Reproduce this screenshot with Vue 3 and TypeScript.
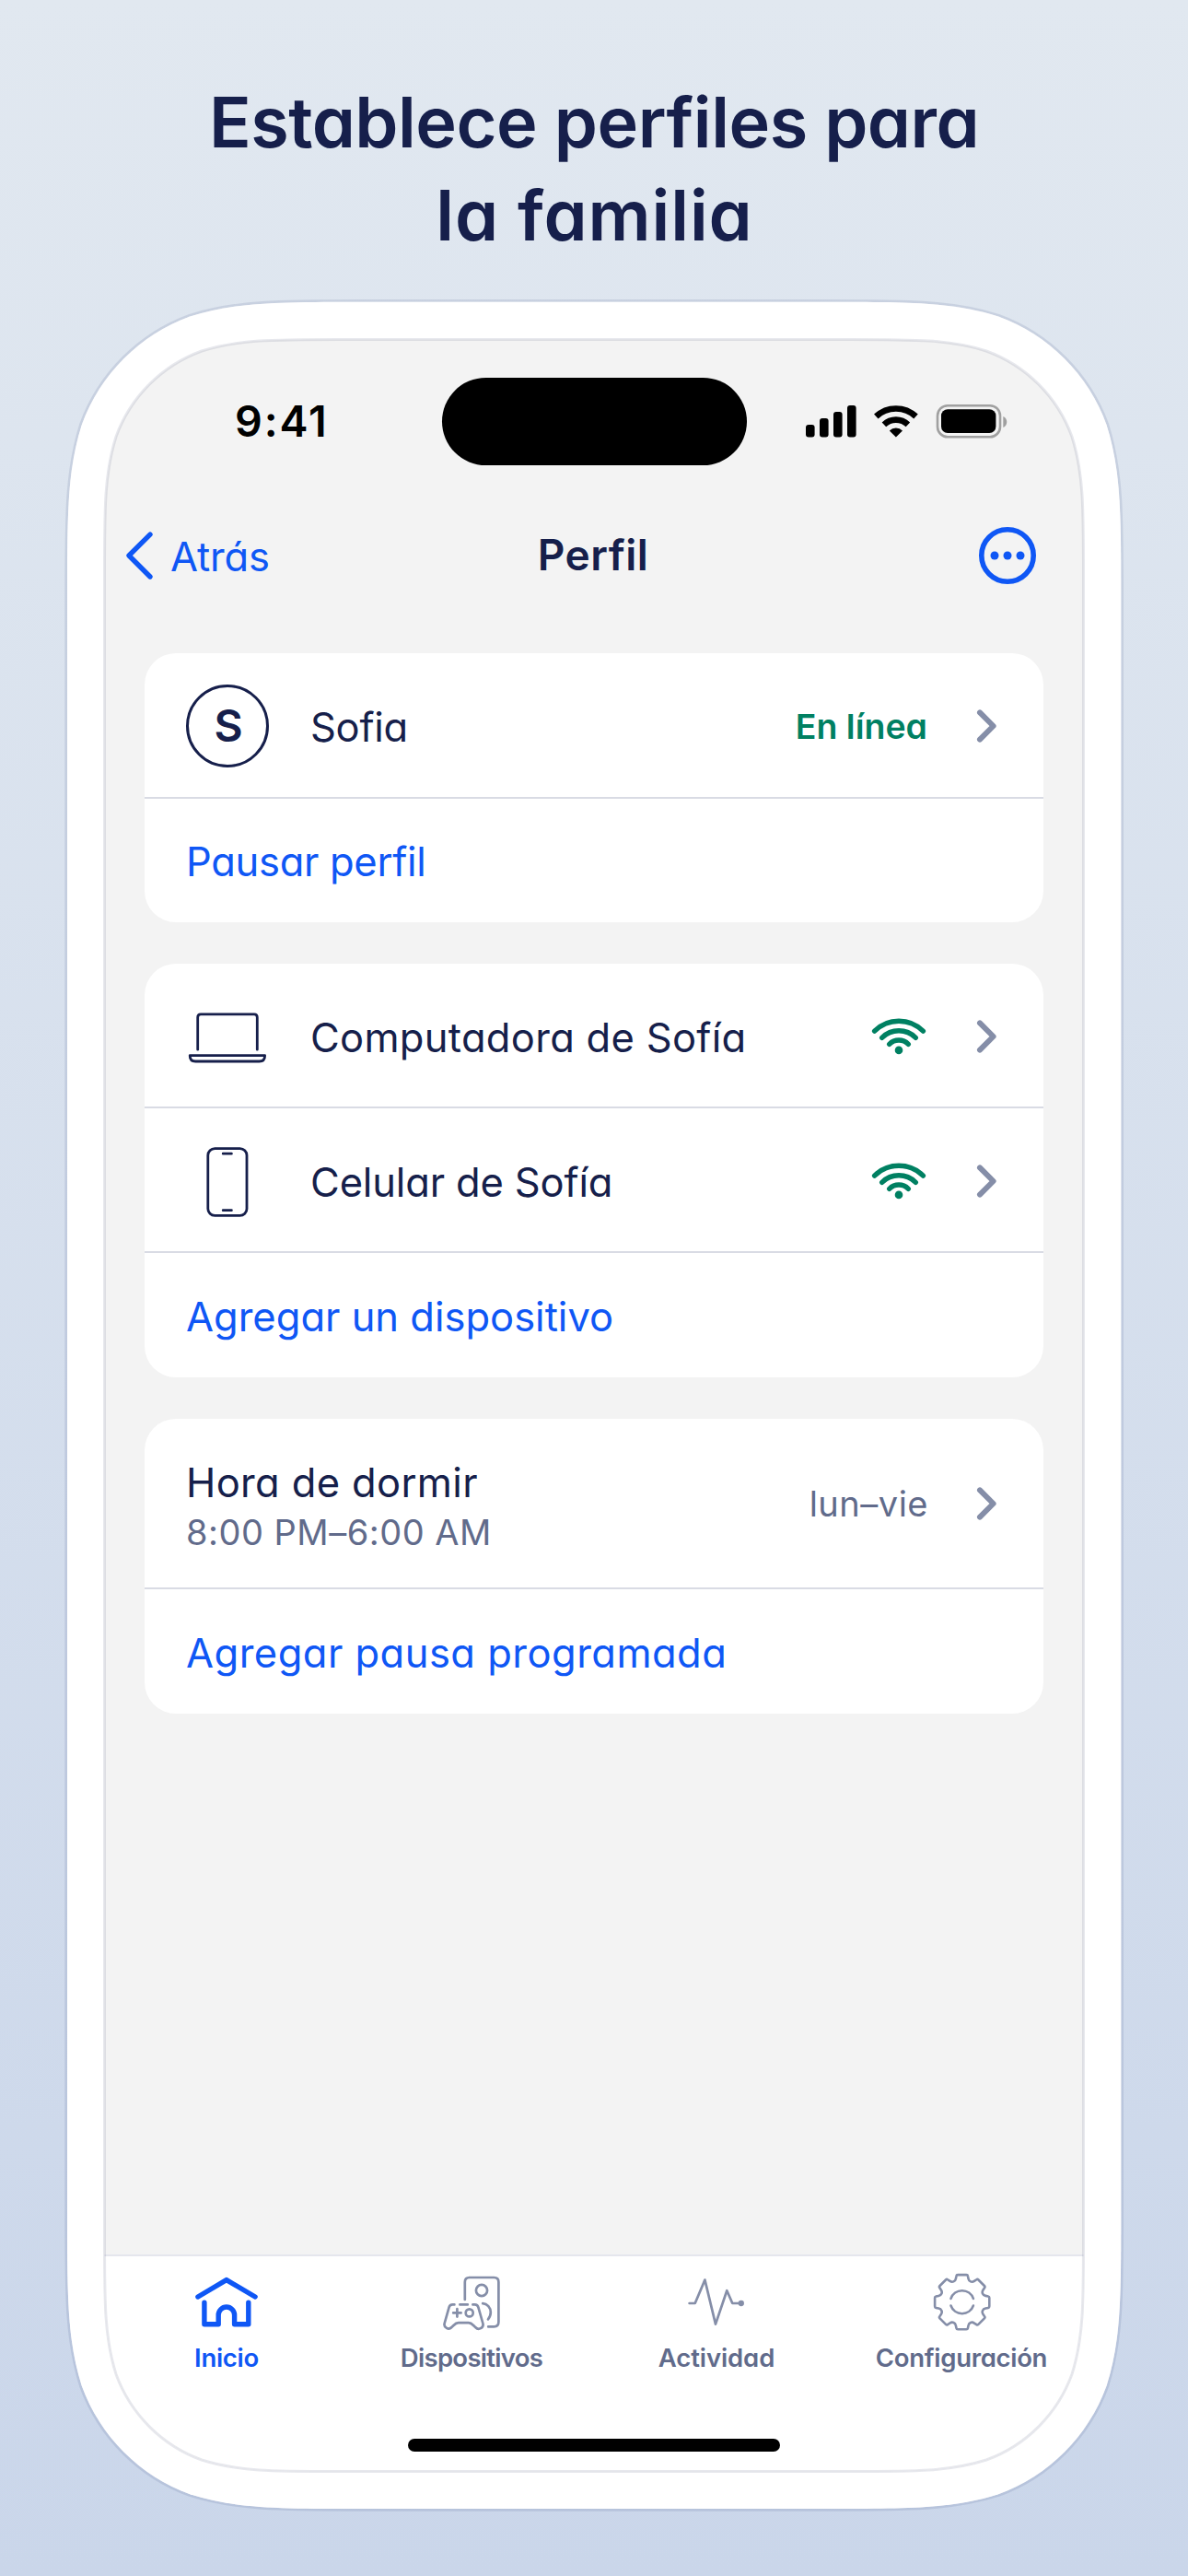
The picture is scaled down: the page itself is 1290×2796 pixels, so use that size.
<script setup lang="ts">
interface Tab { id: string; label: string; active?: boolean }

const tabs: Tab[] = [
  { id: 'home', label: 'Inicio', active: true },
  { id: 'devices', label: 'Dispositivos' },
  { id: 'activity', label: 'Actividad' },
  { id: 'settings', label: 'Configuración' },
]

const devices = [
  { id: 'laptop', name: 'Computadora de Sofía' },
  { id: 'mobile', name: 'Celular de Sofía' },
]

// Rounded rectangle with continuous (smoothed) corners.
function squircle(x: number, y: number, w: number, h: number, r: number): string {
  const c: [number, number][] = [
    [1.5287, 0], [1.0885, 0], [0.8684, 0], [0.6315, 0.0749],
    [0.3728, 0.1691], [0.1691, 0.3728], [0.0749, 0.6315],
    [0, 0.8684], [0, 1.0885], [0, 1.5287],
  ]
  const rev = [...c].reverse()
  const at = (p: [number, number], fx: boolean, fy: boolean) =>
    `${(fx ? x + w - p[0] * r : x + p[0] * r).toFixed(2)} ${(fy ? y + h - p[1] * r : y + p[1] * r).toFixed(2)}`
  const corner = (pts: [number, number][], fx: boolean, fy: boolean) => {
    const s = pts.map((p) => at(p, fx, fy))
    return `L${s[0]} C${s.slice(1, 4).join(' ')} C${s.slice(4, 7).join(' ')} C${s.slice(7, 10).join(' ')}`
  }
  const body = corner(rev, false, false) + corner(c, true, false) + corner(rev, true, true) + corner(c, false, true)
  return `M${body.slice(1)}Z`
}

const bodyPath = squircle(3, 2.7, 1144.3, 2395.3, 211)
const edgePath = squircle(43.5, 43.5, 1063, 2314, 167)
const screenClip = { clipPath: `path('${squircle(0.5, 0.5, 1063, 2314, 167)}')` }

// Eight-tooth gear outline, one tooth rotated around the centre.
function gear(cx: number, cy: number): string {
  const tooth: [number, number][] = [
    [-6.8, -25.5], [-6.2, -28.4], [-6, -29.6], [-4.6, -29.6],
    [4.6, -29.6], [6, -29.6], [6.2, -28.4], [6.8, -25.5],
    [7.4, -22.3], [10.54, -21], [13.22, -22.84],
  ]
  let d = ''
  for (let i = 0; i < 8; i++) {
    const a = (i * Math.PI) / 4
    const p = tooth.map(([x, y]) =>
      `${(cx + x * Math.cos(a) - y * Math.sin(a)).toFixed(2)} ${(cy + x * Math.sin(a) + y * Math.cos(a)).toFixed(2)}`)
    d += `${i ? 'L' : 'M'}${p[0]} L${p[1]} Q${p[2]} ${p[3]} L${p[4]} Q${p[5]} ${p[6]} L${p[7]} C${p[8]} ${p[9]} ${p[10]}`
  }
  return d + 'Z'
}
const gearPath = gear(48, 48)
</script>

<template>
  <div class="page">
    <header class="headline">
      <span class="h-a">Establece perfiles para</span>
      <span class="h-b">la familia</span>
    </header>

    <main class="phone">
      <svg class="layer" viewBox="0 0 1150 2401" width="1150" height="2401">
        <path :d="bodyPath" fill="#fff" stroke="#17306d" stroke-opacity=".11" stroke-width="5.4" />
        <path :d="bodyPath" fill="#fff" stroke="none" />
      </svg>

      <div class="screen" :style="screenClip">
        <div class="status">
          <span class="clock">9:41</span>
          <div class="island"></div>
          <svg class="signals" width="222" height="40" viewBox="873 437 222 40">
            <rect x="875" y="461" width="9.6" height="13.4" rx="3" />
            <rect x="890" y="454" width="9.6" height="20.4" rx="3" />
            <rect x="905" y="447" width="9.6" height="27.4" rx="3" />
            <rect x="920" y="440" width="9.6" height="34.4" rx="3" />
            <path d="M951.3 452 A31.5 31.5 0 0 1 994.5 452" fill="none" stroke="#000" stroke-width="6.6" />
            <path d="M959.9 460.8 A19 19 0 0 1 985.9 460.8" fill="none" stroke="#000" stroke-width="6.6" />
            <path d="M972.9 474.6 L965.8 467.4 A10.2 10.2 0 0 1 980 467.4 Z" />
            <rect x="1018" y="440.2" width="68" height="34" rx="11" fill="none" stroke="#a0a0a0" stroke-width="2.6" />
            <rect x="1022" y="444.3" width="59.4" height="25.7" rx="7" />
            <path d="M1089.3 452 C1094.6 454 1094.6 462 1089.3 464 Z" fill="#a0a0a0" />
          </svg>
        </div>

        <nav class="nav">
          <a class="back">
            <svg width="30" height="56" viewBox="136 575 30 56">
              <path d="M163 580.2 L140 603 L163 626" fill="none" stroke="currentColor" stroke-width="5.4" stroke-linecap="round" stroke-linejoin="round" />
            </svg>
            <span>Atrás</span>
          </a>
          <h1>Perfil</h1>
          <svg class="more" width="64" height="64" viewBox="-32 -32 64 64">
            <circle r="28.2" fill="none" stroke="currentColor" stroke-width="5.6" />
            <circle cx="-14" r="4.5" fill="currentColor" />
            <circle r="4.5" fill="currentColor" />
            <circle cx="14" r="4.5" fill="currentColor" />
          </svg>
        </nav>

        <div class="cards">
          <section class="card">
            <div class="row r1">
              <span class="icon"><span class="avatar">S</span></span>
              <span class="name sofia">Sofia</span>
              <span class="online">En línea</span>
              <svg class="chev" width="24" height="40" viewBox="-4 -20 24 40"><path d="M3 -14.6 L17.6 0 L3 14.6" /></svg>
            </div>
            <div class="row action"><span class="pause">Pausar perfil</span></div>
          </section>

          <section class="card">
            <div v-for="d in devices" :key="d.id" class="row r2">
              <span class="icon">
                <svg v-if="d.id === 'laptop'" class="line" width="90" height="90" viewBox="202 1079.8 90 90">
                  <path d="M214.7 1139 V1104 Q214.7 1100.7 218 1100.7 H276 Q279.3 1100.7 279.3 1104 V1139" />
                  <path d="M206.2 1145.5 H287.6 Q287.6 1151.8 281.5 1151.8 H212.3 Q206.2 1151.8 206.2 1145.5 Z" />
                </svg>
                <svg v-else class="line" width="90" height="90" viewBox="202 1237 90 90">
                  <rect x="225.8" y="1246.6" width="42.2" height="72.8" rx="7.5" />
                  <path d="M242.2 1252.2 H251.4 M242.2 1313.7 H251.4" />
                </svg>
              </span>
              <span class="name" :class="d.id">{{ d.name }}</span>
              <svg class="wifi" width="60" height="42" viewBox="947 1103.5 60 42">
                <path d="M949.6 1118.6 A37.4 37.4 0 0 1 1002.4 1118.6 M957.7 1125.8 A26 26 0 0 1 994.3 1125.8 M965.7 1132.8 A14.6 14.6 0 0 1 986.3 1132.8" />
                <circle cx="976" cy="1139.4" r="4.3" />
              </svg>
              <svg class="chev" width="24" height="40" viewBox="-4 -20 24 40"><path d="M3 -14.6 L17.6 0 L3 14.6" /></svg>
            </div>
            <div class="row action"><span>Agregar un dispositivo</span></div>
          </section>

          <section class="card">
            <div class="row r3">
              <div class="stack">
                <span class="title">Hora de dormir</span>
                <span class="sub">8:00 PM–6:00 AM</span>
              </div>
              <span class="days">lun–vie</span>
              <svg class="chev" width="24" height="40" viewBox="-4 -20 24 40"><path d="M3 -14.6 L17.6 0 L3 14.6" /></svg>
            </div>
            <div class="row action"><span class="schedule">Agregar pausa programada</span></div>
          </section>
        </div>

        <footer class="bottom">
          <div class="tabs">
            <a v-for="t in tabs" :key="t.id" class="tab" :class="[t.id, { active: t.active }]">
              <svg v-if="t.id === 'home'" width="72" height="96" viewBox="209.5 2451 72 96" stroke-width="5.4">
                <path d="M214.4 2493 L245.4 2474.6 L276.6 2493" />
                <path d="M221.4 2499.3 V2522.7 H236.7 V2512.7 A8.7 8.7 0 0 1 254.1 2512.7 V2522.7 H269.3 V2499.3" />
              </svg>
              <svg v-else-if="t.id === 'devices'" width="96" height="96" viewBox="464 2451 96 96" stroke-width="2.7">
                <path d="M504.8 2496 V2477 Q504.8 2472 509.8 2472 H536.4 Q541.4 2472 541.4 2477 V2520.3 Q541.4 2525.4 536.4 2525.4 H530.2" />
                <circle cx="523" cy="2486" r="6.1" />
                <path d="M493.4 2501.4 H491.5 Q488.4 2501.4 487.6 2504.4 L482.6 2522 C481.7 2526 487 2529.8 490.4 2526 C493 2523.8 494.4 2521.2 497.8 2521.2 H508.8 C512.2 2521.2 513.6 2523.8 516.2 2526 C519.8 2529.8 525.4 2526.6 524.4 2522 L519.4 2504.4 Q518.6 2501.4 515.5 2501.4 H513.4 M499.4 2501.4 H507.8" />
                <path d="M524.2 2500.2 C529 2500.4 532.8 2504.6 532.8 2509.8 C532.8 2512.8 531.8 2515.4 530 2517.4" />
                <path d="M492.2 2510.4 H500.6 M496.4 2506.2 V2514.6" />
                <circle cx="509.7" cy="2510.4" r="4" />
              </svg>
              <svg v-else-if="t.id === 'activity'" width="96" height="96" viewBox="730 2451 96 96" stroke-width="2.7">
                <path d="M748.6 2500 H754.7 L765.4 2474.6 L777 2522.6 L789.3 2486.2 L795.3 2500 H804" />
                <circle cx="804.8" cy="2500" r="1.8" fill="currentColor" />
              </svg>
              <svg v-else width="96" height="96" viewBox="-.7 .3 96 96" stroke-width="2.6">
                <path :d="gearPath" />
                <path d="M35.8 44.2 A12.9 12.9 0 0 1 60.2 44.2 M35.8 51.8 A12.9 12.9 0 0 0 60.2 51.8" />
              </svg>
              <span>{{ t.label }}</span>
            </a>
          </div>
          <div class="home-bar"></div>
        </footer>
      </div>

      <svg class="layer" viewBox="0 0 1150 2401" width="1150" height="2401">
        <path :d="edgePath" fill="none" stroke="#17204d" stroke-opacity=".1" stroke-width="3" />
      </svg>
    </main>
  </div>
</template>

<style>
body { margin: 0; }
</style>

<style scoped>
.page {
  width: 1290px;
  height: 2796px;
  overflow: hidden;
  background: linear-gradient(#e1e8f0, #cad6ea);
  color: #161f4b;
  font-family: Inter, "Liberation Sans", sans-serif;
  font-feature-settings: "cv11";
  display: flex;
  flex-direction: column;
  align-items: center;
}
svg { display: block; flex: none; overflow: visible; }
span { white-space: nowrap; }
.headline {
  height: 325px;
  padding-top: 83px;
  box-sizing: border-box;
  display: flex;
  flex-direction: column;
  align-items: center;
  font-size: 75.6px;
  line-height: 100.7px;
  font-weight: 600;
}
.h-a { letter-spacing: -0.5px; }
.h-b { letter-spacing: 0.9px; padding-left: 1px; }
.phone { position: relative; width: 1150px; height: 2401px; padding: 43px; box-sizing: border-box; }
.layer { position: absolute; left: 0; top: 0; pointer-events: none; }
.screen {
  position: relative;
  width: 1064px;
  height: 2315px;
  background: #f3f3f3;
  display: flex;
  flex-direction: column;
}
.status { height: 178px; display: grid; grid-template-columns: 1fr 331px 1fr; align-items: center; }
.clock { padding-left: 142px; color: #000; font-size: 46.6px; line-height: 56px; font-weight: 600; letter-spacing: 1.9px; font-feature-settings: normal; }
.island { height: 95px; border-radius: 48px; background: #000; }
.signals { margin-left: 62.5px; }
.nav { height: 114px; display: grid; grid-template-columns: 1fr auto 1fr; align-items: center; padding: 0 23px; }
.back { display: flex; align-items: center; gap: 19px; color: #0f57f5; font-size: 43.5px; line-height: 60px; letter-spacing: -0.2px; }
.back span { padding-top: 2px; }
.nav h1 { margin: 0; padding-right: 2px; font-size: 46px; line-height: 58px; padding-bottom: 2px; font-weight: 600; letter-spacing: 0.4px; }
.more { color: #0f57f5; justify-self: end; margin-right: 28px; }
.cards { padding: 49px 44px 0; display: flex; flex-direction: column; gap: 45px; flex: 1; }
.card { background: #fff; border-radius: 34px; }
.row { display: flex; align-items: center; box-sizing: border-box; padding: 2px 52px 0 45px; border-bottom: 2px solid #d9dbe4; font-size: 43.5px; line-height: 54px; }
.r1 { height: 158px; }
.r2 { height: 157px; }
.r3 { height: 185px; padding-top: 1px; }
.action { height: 135px; border-bottom: 0; color: #0f57f5; }
.card:first-child .action { height: 134px; }
.icon { width: 90px; margin-right: 44px; flex: none; }
.avatar { display: flex; align-items: center; justify-content: center; width: 90px; height: 90px; box-sizing: border-box; border: 3px solid #161f4b; border-radius: 50%; font-size: 48px; font-weight: 600; padding-left: 2px; }
.name { flex: 1; padding: 2px 0 0 1px; }
.sofia { letter-spacing: -0.3px; }
.name.laptop { letter-spacing: 0.3px; }
.name.mobile { letter-spacing: -0.15px; }
.pause { letter-spacing: -0.3px; }
.schedule { letter-spacing: 0.48px; }
.online { color: #008062; font-size: 37.5px; font-weight: 600; padding-top: 1px; margin-right: -1px; }
.wifi { fill: none; stroke: #008062; stroke-width: 5.4; stroke-linecap: round; }
.wifi circle { fill: #008062; stroke: none; }
.chev { fill: none; stroke: #858ea8; stroke-width: 6; stroke-linecap: round; stroke-linejoin: round; margin-left: 50px; }
.online + .chev, .days + .chev { margin-left: 51px; }
.line { fill: none; stroke: #161f4b; stroke-width: 2.8; stroke-linecap: round; stroke-linejoin: round; }
.stack { flex: 1; display: flex; flex-direction: column; padding-top: 7px; }
.title { letter-spacing: 0.35px; }
.sub { font-size: 38px; color: #616b8b; letter-spacing: 0.5px; }
.days { font-size: 38px; color: #616b8b; letter-spacing: 0.5px; margin-right: -2px; }
.bottom { height: 236px; box-sizing: border-box; background: #fff; border-top: 2px solid #e5e6ed; display: flex; flex-direction: column; align-items: center; }
.tabs { width: 100%; display: flex; }
.tab { flex: 1; display: flex; flex-direction: column; align-items: center; font-size: 27.5px; line-height: 36px; font-weight: 600; color: #616b8b; padding-top: 2px; }
.tab span { margin-top: -6.5px; letter-spacing: -0.3px; }
.tab.devices span { letter-spacing: -0.7px; }
.tab.activity span { letter-spacing: -0.1px; }
.tab svg { fill: none; stroke: #858ea8; color: #858ea8; stroke-linecap: round; stroke-linejoin: round; }
.tab.active { color: #0f57f5; }
.tab.active svg { stroke: #0f57f5; }
.home-bar { width: 404px; height: 14px; border-radius: 7px; background: #000; margin-top: 70.5px; }
</style>
